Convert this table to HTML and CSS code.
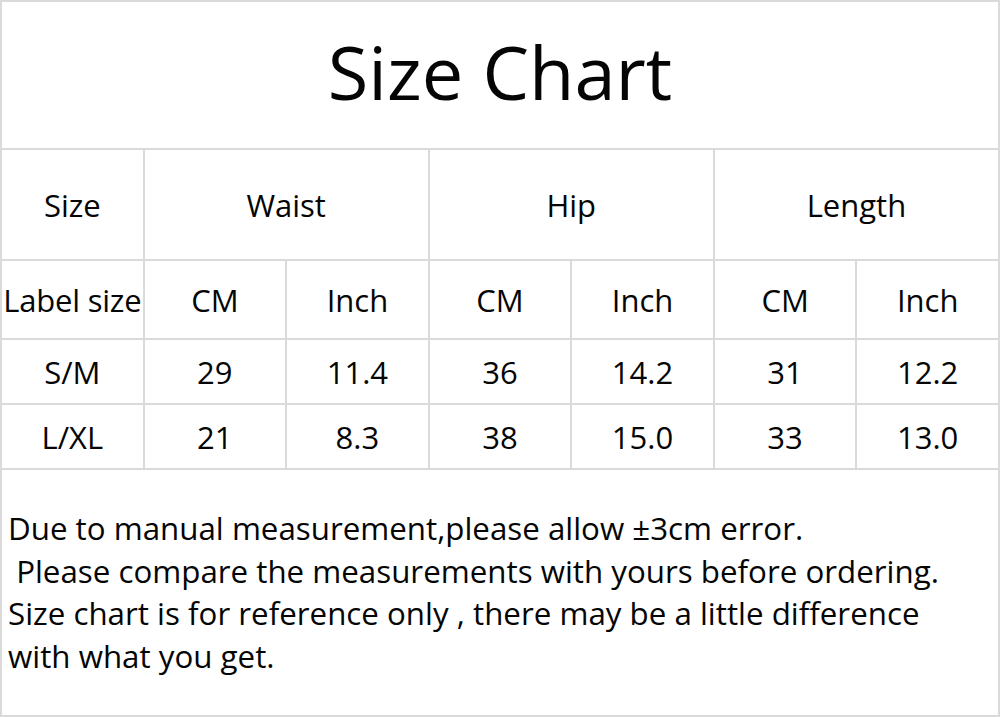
FILE: index.html
```html
<!DOCTYPE html>
<html>
<head>
<meta charset="utf-8">
<link rel="stylesheet" href="styles.css">
</head>
<body>
<table class="chart">
  <colgroup>
    <col class="c"><col class="c"><col class="c"><col class="c"><col class="c"><col class="c"><col class="c">
  </colgroup>
  <tr class="title-row"><td colspan="7" class="title">Size Chart</td></tr>
  <tr class="head-row">
    <td>Size</td>
    <td colspan="2">Waist</td>
    <td colspan="2">Hip</td>
    <td colspan="2">Length</td>
  </tr>
  <tr class="sub-row">
    <td class="label">Label size</td>
    <td>CM</td><td>Inch</td>
    <td>CM</td><td>Inch</td>
    <td>CM</td><td>Inch</td>
  </tr>
  <tr class="data-row">
    <td>S/M</td><td>29</td><td>11.4</td><td>36</td><td>14.2</td><td>31</td><td>12.2</td>
  </tr>
  <tr class="data-row">
    <td>L/XL</td><td>21</td><td>8.3</td><td>38</td><td>15.0</td><td>33</td><td>13.0</td>
  </tr>
  <tr class="notes-row">
    <td colspan="7" class="notes">
      <p>Due to manual measurement,please allow ±3cm error.</p>
      <p>&nbsp;Please compare the measurements with yours before ordering.</p>
      <p>Size chart is for reference only , there may be a little difference</p>
      <p>with what you get.</p>
    </td>
  </tr>
</table>
</body>
</html>
```

FILE: styles.css
```css
html, body {
  margin: 0;
  padding: 0;
  background: #ffffff;
}

body {
  font-family: "Open Sans", "Noto Sans", sans-serif;
  color: #050505;
}

.chart {
  width: 1000px;
  border-collapse: collapse;
  table-layout: fixed;
}

.chart td {
  border: 2px solid #dadada;
  text-align: center;
  vertical-align: middle;
  padding: 0;
  font-size: 31px;
  white-space: nowrap;
  overflow: visible;
}

.title-row { height: 148px; }
.head-row { height: 111px; }
.sub-row { height: 79px; }
.data-row { height: 65px; }
.notes-row { height: 247px; }

.chart td.title {
  font-size: 74px;
  padding-bottom: 8px;
}

.chart td.label {
  letter-spacing: -0.2px;
}

.chart td.notes {
  text-align: left;
  vertical-align: top;
  padding: 37px 0 0 6px;
  font-size: 31.3px;
  line-height: 42.5px;
}

.notes p {
  margin: 0;
  white-space: pre;
}
```
